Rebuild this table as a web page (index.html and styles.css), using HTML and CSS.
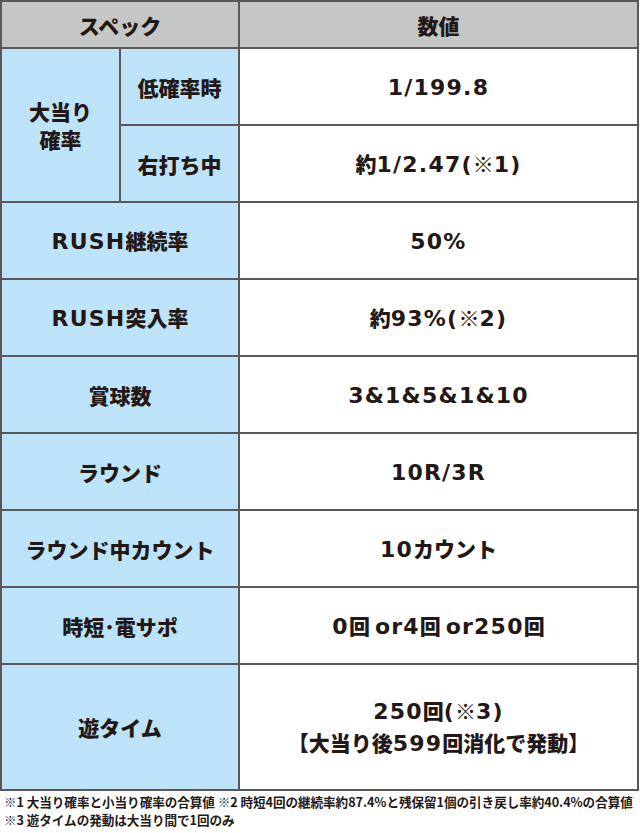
FILE: index.html
```html
<!DOCTYPE html>
<html lang="ja">
<head>
<meta charset="utf-8">
<title>スペック</title>
<link rel="stylesheet" href="styles.css">
</head>
<body>
<div class="spec">
  <div class="cell head span2"><span class="t">スペック</span></div>
  <div class="cell head"><span class="t">数値</span></div>

  <div class="cell label tall"><span class="t">大当り<br>確率</span></div>
  <div class="cell label"><span class="t">低確率時</span></div>
  <div class="cell val"><span class="t"><span class="n">1/199.8</span></span></div>
  <div class="cell label"><span class="t">右打ち中</span></div>
  <div class="cell val"><span class="t">約<span class="n">1/2.47(</span>※<span class="n">1)</span></span></div>

  <div class="cell label span2"><span class="t"><span class="n">RUSH</span>継続率</span></div>
  <div class="cell val"><span class="t"><span class="n">50%</span></span></div>

  <div class="cell label span2"><span class="t"><span class="n">RUSH</span>突入率</span></div>
  <div class="cell val"><span class="t">約<span class="n">93%(</span>※<span class="n">2)</span></span></div>

  <div class="cell label span2"><span class="t">賞球数</span></div>
  <div class="cell val"><span class="t"><span class="n">3&amp;1&amp;5&amp;1&amp;10</span></span></div>

  <div class="cell label span2"><span class="t">ラウンド</span></div>
  <div class="cell val"><span class="t"><span class="n">10R/3R</span></span></div>

  <div class="cell label span2"><span class="t">ラウンド中カウント</span></div>
  <div class="cell val"><span class="t"><span class="n">10</span>カウント</span></div>

  <div class="cell label span2"><span class="t">時短･電サポ</span></div>
  <div class="cell val"><span class="t"><span class="n">0</span>回<span class="n sp">or4</span>回<span class="n sp">or250</span>回</span></div>

  <div class="cell label span2"><span class="t">遊タイム</span></div>
  <div class="cell val"><span class="t two"><span class="n">250</span>回<span class="n">(</span>※<span class="n">3)</span><br>【大当り後<span class="n">599</span>回消化で発動】</span></div>
</div>
<div class="notes">
  <p>※1 大当り確率と小当り確率の合算値 ※2 時短4回の継続率約87.4%と残保留1個の引き戻し率約40.4%の合算値</p>
  <p>※3 遊タイムの発動は大当り間で1回のみ</p>
</div>
</body>
</html>
```
FILE: styles.css
```css
html, body {
  margin: 0;
  padding: 0;
  background: #ffffff;
}

body {
  width: 640px;
  height: 833px;
  overflow: hidden;
  color: #231815;
  font-family: "Noto Sans CJK JP", "Liberation Sans", sans-serif;
  font-weight: 900;
}

.spec {
  width: 639px;
  box-sizing: border-box;
  display: grid;
  grid-template-columns: 117px 117px 1fr;
  grid-template-rows: 45px repeat(8, 75px) 124px;
  gap: 2px;
  padding: 2px;
  background: #595757;
}

.cell {
  display: flex;
  align-items: center;
  justify-content: center;
  text-align: center;
  font-size: 21px;
  line-height: 28px;
}

.t {
  display: block;
  white-space: nowrap;
}

.head {
  background: #c5c6c6;
}

.label {
  background: #bde3f8;
}

.val {
  background: #ffffff;
}

.span2 {
  grid-column: span 2;
}

.tall {
  grid-row: span 2;
}

.two {
  line-height: 31px;
}

.n {
  font-family: "DejaVu Sans", "Noto Sans CJK JP", sans-serif;
  font-weight: 700;
  font-size: 22px;
  letter-spacing: 1.2px;
}

.sp {
  margin-left: 5px;
}

.notes {
  padding: 2px 0 0 4px;
  font-size: 12.6px;
  line-height: 18px;
  font-family: "Noto Sans CJK JP", sans-serif;
  font-weight: 700;
  letter-spacing: -0.05px;
}

.notes p {
  margin: 0;
  white-space: nowrap;
}
```
